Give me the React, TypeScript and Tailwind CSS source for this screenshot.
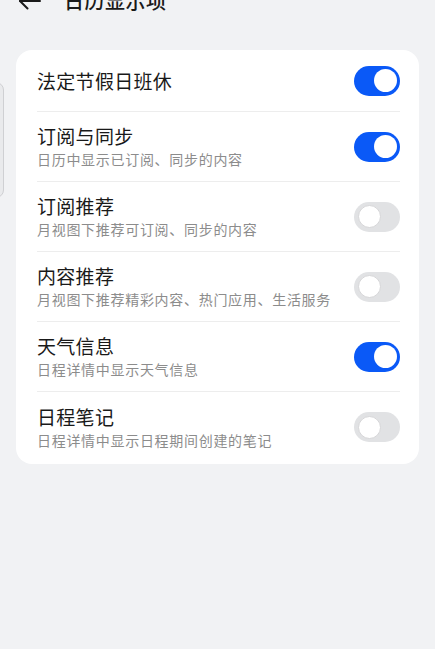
import { useState } from 'react';

type Item = {
  title: string;
  desc?: string;
  on: boolean;
};

const initialItems: Item[] = [
  { title: '法定节假日班休', on: true },
  { title: '订阅与同步', desc: '日历中显示已订阅、同步的内容', on: true },
  { title: '订阅推荐', desc: '月视图下推荐可订阅、同步的内容', on: false },
  { title: '内容推荐', desc: '月视图下推荐精彩内容、热门应用、生活服务', on: false },
  { title: '天气信息', desc: '日程详情中显示天气信息', on: true },
  { title: '日程笔记', desc: '日程详情中显示日程期间创建的笔记', on: false },
];

function Toggle({ on, onClick }: { on: boolean; onClick: () => void }) {
  return (
    <button
      onClick={onClick}
      className={`relative w-[46px] h-[30px] rounded-full shrink-0 ${
        on ? 'bg-[#0a59f7]' : 'bg-[#e1e2e4]'
      }`}
    >
      <span
        className={`absolute top-[3.5px] w-[23px] h-[23px] rounded-full bg-white ${
          on ? 'right-[3px]' : 'left-[3.5px] border border-[#d6d6d8]'
        }`}
      />
    </button>
  );
}

export default function App() {
  const [items, setItems] = useState<Item[]>(initialItems);

  const toggle = (i: number) => {
    setItems((prev) => prev.map((it, idx) => (idx === i ? { ...it, on: !it.on } : it)));
  };

  return (
    <div
      className="relative min-h-[649px] w-full bg-[#f1f2f4] overflow-hidden"
      style={{ fontFamily: '"Noto Sans CJK SC", "Noto Sans", sans-serif' }}
    >
      {/* 顶部栏（被截掉一半） */}
      <div className="-mt-[27px] h-[56px] flex items-center px-[17px]">
        <svg width="25" height="24" viewBox="0 0 25 24" fill="none" stroke="#1a1a1a" strokeWidth="2" strokeLinecap="round" strokeLinejoin="round">
          <path d="M3 12h20" />
          <path d="M10.5 4.5 3 12l7.5 7.5" />
        </svg>
        <h1 className="ml-[22px] text-[20px] font-medium tracking-[0.5px] text-[#1a1a1a]">日历显示项</h1>
      </div>

      {/* 左侧露出的面板边缘 */}
      <div className="absolute -left-[20px] top-[82px] w-[24px] h-[116px] rounded-[8px] border border-[#cfd0d3] bg-[#e9eaec]" />

      <div className="mt-[21px] mx-[16px] bg-white rounded-[16px] pb-[2px]">
        {items.map((item, i) => (
          <div key={item.title} className="pl-[21px] pr-[19px]">
            <div
              className={`flex items-center justify-between ${item.desc ? 'h-[70px]' : 'h-[62px]'} ${
                i < items.length - 1 ? 'border-b border-[#ededed]' : ''
              }`}
            >
              <div className="flex flex-col">
                <span className="text-[19px] leading-[24px] tracking-[0.3px] text-[#191919]">{item.title}</span>
                {item.desc && (
                  <span className="mt-[2px] text-[14px] leading-[19px] tracking-[0.7px] text-[#8c8c8c]">
                    {item.desc}
                  </span>
                )}
              </div>
              <Toggle on={item.on} onClick={() => toggle(i)} />
            </div>
          </div>
        ))}
      </div>
    </div>
  );
}
